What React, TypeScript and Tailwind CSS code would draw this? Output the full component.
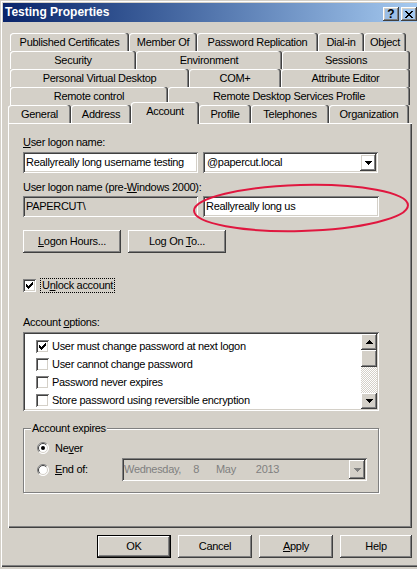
import type { ReactNode } from "react";

const RAISED =
  "shadow-[inset_-1px_-1px_#404040,inset_1px_1px_#ffffff,inset_-2px_-2px_#808080,inset_2px_2px_#d4d0c8]";
const SUNKEN =
  "shadow-[inset_1px_1px_#808080,inset_-1px_-1px_#ffffff,inset_2px_2px_#404040,inset_-2px_-2px_#d4d0c8]";
const TAB = "shadow-[inset_-1px_0_#404040,inset_-2px_0_#808080,inset_1px_1px_#ffffff]";

type TabDef = { label: string; w: string; active?: boolean };

const backRows: { ml: string; tabs: TabDef[] }[] = [
  {
    ml: "ml-[10px]",
    tabs: [
      { label: "Published Certificates", w: "w-[119px]" },
      { label: "Member Of", w: "w-[68px]" },
      { label: "Password Replication", w: "w-[121px]" },
      { label: "Dial-in", w: "w-[46px]" },
      { label: "Object", w: "w-[42px]" },
    ],
  },
  {
    ml: "ml-[10px]",
    tabs: [
      { label: "Security", w: "w-[126px]" },
      { label: "Environment", w: "w-[146px]" },
      { label: "Sessions", w: "w-[128px]" },
    ],
  },
  {
    ml: "ml-[10px]",
    tabs: [
      { label: "Personal Virtual Desktop", w: "w-[179px]" },
      { label: "COM+", w: "w-[92px]" },
      { label: "Attribute Editor", w: "w-[129px]" },
    ],
  },
  {
    ml: "ml-[10px]",
    tabs: [
      { label: "Remote control", w: "w-[158px]" },
      { label: "Remote Desktop Services Profile", w: "w-[242px]" },
    ],
  },
];

const frontRow: TabDef[] = [
  { label: "General", w: "w-[63px]" },
  { label: "Address", w: "w-[60px]" },
  { label: "Account", w: "w-[68px]", active: true },
  { label: "Profile", w: "w-[52px]" },
  { label: "Telephones", w: "w-[78px]" },
  { label: "Organization", w: "w-[80px]" },
];

const options = [
  { label: "User must change password at next logon", on: true },
  { label: "User cannot change password", on: false },
  { label: "Password never expires", on: false },
  { label: "Store password using reversible encryption", on: false },
];

function Tab({ tab }: { tab: TabDef }) {
  if (tab.active) {
    return (
      <div
        className={`${tab.w} h-[22px] -mb-[1px] pb-[3px] relative z-10 bg-[#d4d0c8] rounded-t-[3px] flex items-center justify-center ${TAB}`}
      >
        {tab.label}
      </div>
    );
  }
  return (
    <div className={`${tab.w} h-[18px] shrink-0 rounded-t-[3px] flex items-center justify-center ${TAB}`}>
      {tab.label}
    </div>
  );
}

function DownArrow({ color = "#000" }: { color?: string }) {
  return (
    <svg width="7" height="4" viewBox="0 0 7 4" shapeRendering="crispEdges">
      <path d="M0 0h7v1h-1v1h-1v1h-1v1h-1v-1h-1v-1h-1v-1h-1z" fill={color} />
    </svg>
  );
}

function UpArrow() {
  return (
    <svg width="7" height="4" viewBox="0 0 7 4" shapeRendering="crispEdges">
      <path d="M3 0h1v1h1v1h1v1h1v1h-7v-1h1v-1h1v-1h1z" fill="#000" />
    </svg>
  );
}

function Check({ on }: { on?: boolean }) {
  return (
    <span className={`w-[13px] h-[13px] shrink-0 bg-white flex items-center justify-center ${SUNKEN}`}>
      {on && (
        <svg width="7" height="7" viewBox="0 0 7 7" shapeRendering="crispEdges">
          <path
            d="M6 0h1v3h-1v1h-1v1h-1v1h-1v1h-1v-1h-1v-1h-1v-3h1v1h1v1h1v-1h1v-1h1v-1h1z"
            fill="#000"
          />
        </svg>
      )}
    </span>
  );
}

function Radio({ on }: { on?: boolean }) {
  return (
    <svg width="12" height="12" viewBox="0 0 12 12" className="shrink-0">
      <circle cx="6" cy="6" r="5.5" fill="#ffffff" />
      <path d="M2.1 9.9 A5.5 5.5 0 0 1 9.9 2.1" stroke="#808080" fill="none" />
      <path d="M9.9 2.1 A5.5 5.5 0 0 1 2.1 9.9" stroke="#ffffff" fill="none" />
      <path d="M2.8 9.2 A4.5 4.5 0 0 1 9.2 2.8" stroke="#404040" fill="none" />
      <path d="M9.2 2.8 A4.5 4.5 0 0 1 2.8 9.2" stroke="#d4d0c8" fill="none" />
      {on && <circle cx="6" cy="6" r="2" fill="#000" />}
    </svg>
  );
}

function Btn({ children, w, def }: { children: ReactNode; w: string; def?: boolean }) {
  return (
    <div
      className={`${w} h-[23px] flex items-center justify-center ${RAISED} ${def ? "border border-black" : ""}`}
    >
      {children}
    </div>
  );
}

export default function App() {
  return (
    <div className="w-[417px] h-[569px] bg-[#d4d0c8] relative overflow-hidden font-['Liberation_Sans',Arial,sans-serif] text-[11px] leading-[13px] tracking-[-0.3px] text-black">
      <div className="h-[567px] flex flex-col shadow-[inset_1px_1px_#d4d0c8,inset_2px_2px_#ffffff,inset_0_-1px_#404040,inset_0_-2px_#808080]">
        {/* title bar */}
        <div className="ml-[3px] mt-[3px] h-[19px] flex items-start justify-between bg-linear-to-r from-[#0a246a] to-[#a6caf0]">
          <span className="pl-[2px] pt-[3px] text-white font-bold text-[12px] tracking-normal">Testing Properties</span>
          <div className="flex gap-[2px] pt-[4px]">
            <div className={`w-[16px] h-[14px] flex items-center justify-center font-bold text-[12px] tracking-normal ${RAISED}`}>
              ?
            </div>
            <div className={`w-[16px] h-[14px] flex items-center justify-center ${RAISED}`}>
              <svg width="8" height="7" viewBox="0 0 8 7" shapeRendering="crispEdges">
                <path
                  d="M0 0h2v1h1v1h2v-1h1v-1h2v1h-1v1h-1v1h-1v1h1v1h1v1h1v1h-2v-1h-1v-1h-2v1h-1v1h-2v-1h1v-1h1v-1h1v-1h-1v-1h-1v-1h-1z"
                  fill="#000"
                />
              </svg>
            </div>
          </div>
        </div>

        {/* tab rows */}
        <div className="mt-[11px] flex flex-col">
          {backRows.map((row, i) => (
            <div key={i} className={`${row.ml} flex`}>
              {row.tabs.map((t) => (
                <Tab key={t.label} tab={t} />
              ))}
            </div>
          ))}
          <div className="ml-[8px] -mt-[3px] h-[21px] flex items-end">
            {frontRow.map((t) => (
              <Tab key={t.label} tab={t} />
            ))}
          </div>
        </div>

        {/* tab page */}
        <div className="ml-[8px] w-[404px] h-[405px] shrink-0 pl-[15px] pt-[13px] flex flex-col shadow-[inset_1px_1px_#ffffff,inset_-1px_-1px_#404040,inset_-2px_-2px_#808080]">
          <div>
            <u>U</u>ser logon name:
          </div>
          <div className="mt-[3px] flex gap-[5px]">
            <div className={`w-[175px] h-[21px] bg-white pl-[3px] flex items-center ${SUNKEN}`}>
              Reallyreally long username testing
            </div>
            <div className={`w-[175px] h-[21px] bg-white pl-[4px] pr-[2px] flex items-center justify-between ${SUNKEN}`}>
              <span>@papercut.local</span>
              <div className={`w-[16px] h-[17px] flex items-center justify-center ${RAISED}`}>
                <DownArrow />
              </div>
            </div>
          </div>

          <div className="mt-[8px]">
            User logon name (pre-<u>W</u>indows 2000):
          </div>
          <div className="mt-[2px] flex gap-[5px]">
            <div className={`w-[175px] h-[21px] bg-[#d4d0c8] pl-[3px] flex items-center ${SUNKEN}`}>PAPERCUT\</div>
            <div className={`w-[176px] h-[21px] bg-white pl-[3px] flex items-center ${SUNKEN}`}>
              Reallyreally long us
            </div>
          </div>

          <div className="mt-[13px] flex gap-[7px]">
            <Btn w="w-[98px]">
              <span>
                <u>L</u>ogon Hours...
              </span>
            </Btn>
            <Btn w="w-[98px]">
              <span>
                Log On <u>T</u>o...
              </span>
            </Btn>
          </div>

          <div className="mt-[24px] h-[16px] flex items-center gap-[4px]">
            <Check on />
            <span className="border border-dotted border-black px-[1px] leading-[13px]">
              U<u>n</u>lock account
            </span>
          </div>

          <div className="mt-[23px]">
            Account <u>o</u>ptions:
          </div>
          <div className={`mt-[3px] w-[356px] h-[79px] bg-white p-[2px] flex ${SUNKEN}`}>
            <div className="flex-1 pt-[3px] flex flex-col">
              {options.map((o) => (
                <div key={o.label} className="h-[18px] pl-[11px] flex items-center gap-[3px]">
                  <Check on={o.on} />
                  <span>{o.label}</span>
                </div>
              ))}
            </div>
            <div className="w-[16px] flex flex-col">
              <div className={`h-[16px] flex items-center justify-center bg-[#d4d0c8] ${RAISED}`}>
                <UpArrow />
              </div>
              <div className={`h-[17px] bg-[#d4d0c8] ${RAISED}`} />
              <div className="flex-1 bg-[image:repeating-conic-gradient(#d4d0c8_0%_25%,#ffffff_0%_50%)] bg-[length:2px_2px]" />
              <div className={`h-[16px] flex items-center justify-center bg-[#d4d0c8] ${RAISED}`}>
                <DownArrow />
              </div>
            </div>
          </div>

          <div className="mt-[17px] w-[356px] h-[65px] relative border border-[#808080] shadow-[inset_1px_1px_#ffffff,1px_1px_#ffffff] pl-[13px] pt-[11px] flex flex-col">
            <span className="absolute -top-[7px] left-[7px] px-[1px] bg-[#d4d0c8]">Account expires</span>
            <div className="h-[16px] flex items-center gap-[6px]">
              <Radio on />
              <span>
                Ne<u>v</u>er
              </span>
            </div>
            <div className="mt-[2px] h-[23px] flex items-center">
              <div className="w-[85px] flex items-center gap-[6px]">
                <Radio />
                <span>
                  <u>E</u>nd of:
                </span>
              </div>
              <div className={`w-[245px] h-[23px] bg-[#d4d0c8] pl-[2px] pr-[2px] flex items-center text-[#808080] ${SUNKEN}`}>
                <span>Wednesday,</span>
                <span className="ml-[12px]">8</span>
                <span className="ml-[17px]">May</span>
                <span className="ml-[20px]">2013</span>
                <div className={`ml-auto w-[16px] h-[19px] flex items-center justify-center ${RAISED}`}>
                  <DownArrow color="#808080" />
                </div>
              </div>
            </div>
          </div>
        </div>

        {/* dialog buttons */}
        <div className="mt-[7px] ml-[97px] flex gap-[7px]">
          <Btn w="w-[74px]" def>
            OK
          </Btn>
          <Btn w="w-[74px]">Cancel</Btn>
          <Btn w="w-[74px]">
            <span>
              <u>A</u>pply
            </span>
          </Btn>
          <Btn w="w-[72px]">Help</Btn>
        </div>
      </div>

      {/* red annotation ellipse */}
      <svg className="absolute inset-0 pointer-events-none" width="417" height="569" viewBox="0 0 417 569">
        <ellipse
          cx="301"
          cy="208"
          rx="107"
          ry="23"
          transform="rotate(-1.5 301 208)"
          fill="none"
          stroke="#e0173f"
          strokeWidth="2"
        />
      </svg>
    </div>
  );
}
